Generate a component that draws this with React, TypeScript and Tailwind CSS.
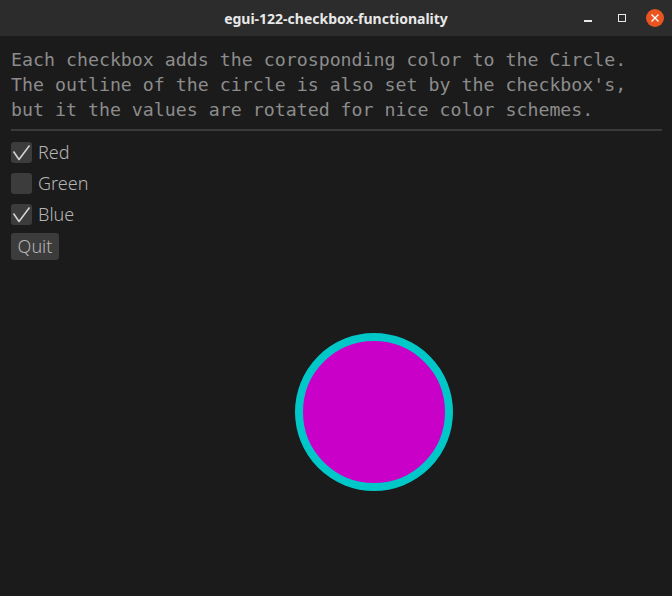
import React, { useState } from "react";

const mono = { fontFamily: '"DejaVu Sans Mono", "Liberation Mono", monospace' };
const sans = { fontFamily: '"Noto Sans", "Open Sans", sans-serif' };

function Check({ label, checked, onToggle }: { label: string; checked: boolean; onToggle: () => void }) {
  return (
    <button onClick={onToggle} className="flex h-[25px] items-center gap-[6px] text-left">
      <span className="flex h-[21px] w-[21px] items-center justify-center rounded-[3px] bg-[#3c3c3c]">
        {checked && (
          <svg width="21" height="21" viewBox="0 0 21 21" fill="none">
            <path d="M2.5 9.5 L8 17.5 L18.5 3.5" stroke="#d2d2d2" strokeWidth="1.6" strokeLinejoin="round" />
          </svg>
        )}
      </span>
      <span className="text-[18px] font-light leading-none text-[#b4b4b4]" style={sans}>
        {label}
      </span>
    </button>
  );
}

export default function App() {
  const [red, setRed] = useState(true);
  const [green, setGreen] = useState(false);
  const [blue, setBlue] = useState(true);

  const fill = `rgb(${red ? 200 : 0}, ${green ? 200 : 0}, ${blue ? 200 : 0})`;
  const stroke = `rgb(${blue ? 0 : 200}, ${red ? 200 : 0}, ${green ? 0 : 200})`;

  return (
    <div className="flex h-[596px] w-[672px] flex-col overflow-hidden bg-[#1b1b1b]">
      {/* title bar */}
      <div className="relative flex h-[36px] shrink-0 items-center justify-center bg-[#2c2c2c]">
        <span className="text-[14px] font-bold text-[#e8e8e8]" style={sans}>
          egui-122-checkbox-functionality
        </span>
        <div className="absolute right-[8px] top-0 flex h-[36px] items-center">
          <span className="mr-[26px] mt-[6px] h-[1.5px] w-[8px] bg-[#e8e8e8]" />
          <span className="mr-[20px] h-[8px] w-[8px] border-[1.5px] border-[#e8e8e8]" />
          <span className="flex h-[18px] w-[18px] items-center justify-center rounded-full bg-[#e95420]">
            <svg width="8" height="8" viewBox="0 0 8 8">
              <path d="M0.5 0.5 L7.5 7.5 M7.5 0.5 L0.5 7.5" stroke="#fff" strokeWidth="1.3" />
            </svg>
          </span>
        </div>
      </div>

      {/* central panel */}
      <div className="flex flex-col pl-[11px] pr-[10px] pt-[10.5px]">
        <p className="whitespace-pre text-[18.25px] leading-[25px] text-[#8c8c8c]" style={mono}>
          {"Each checkbox adds the corosponding color to the Circle.\nThe outline of the circle is also set by the checkbox's,\nbut it the values are rotated for nice color schemes."}
        </p>
        <div className="mt-[7.5px] h-[2px] w-[651px] bg-[#3a3a3a]" />
        <div className="mt-[8.5px] flex flex-col items-start gap-[6px]">
          <Check label="Red" checked={red} onToggle={() => setRed(!red)} />
          <Check label="Green" checked={green} onToggle={() => setGreen(!green)} />
          <Check label="Blue" checked={blue} onToggle={() => setBlue(!blue)} />
          <button
            className="flex h-[27px] w-[48px] items-center justify-center rounded-[3px] bg-[#3c3c3c] text-[18px] font-light text-[#b4b4b4]"
            style={sans}
          >
            Quit
          </button>
        </div>
        <div className="ml-[284px] mt-[73px]">
          <svg width="158" height="158" viewBox="0 0 158 158">
            <circle cx="79" cy="79" r="75" fill={fill} stroke={stroke} strokeWidth="8" />
          </svg>
        </div>
      </div>
    </div>
  );
}
